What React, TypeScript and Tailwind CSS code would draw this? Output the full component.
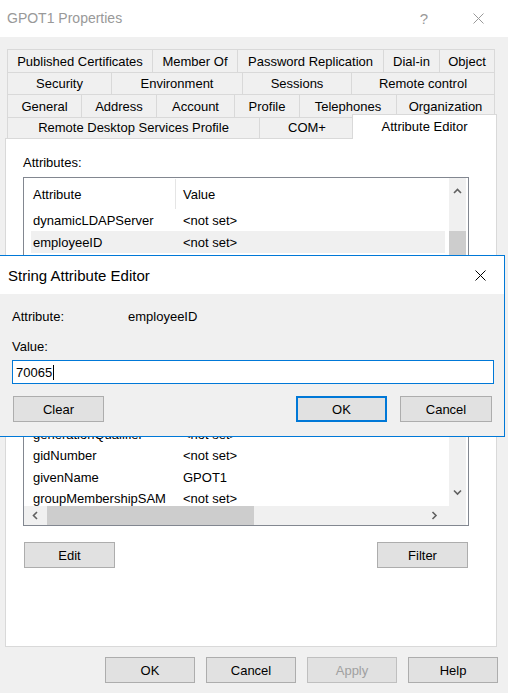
import React from "react";

const rows: [string, string][] = [
  ["dynamicLDAPServer", "<not set>"],
  ["employeeID", "<not set>"],
  ["employeeNumber", "<not set>"],
  ["employeeType", "<not set>"],
  ["extensionName", "<not set>"],
  ["facsimileTelephoneNumber", "<not set>"],
  ["flags", "<not set>"],
  ["fromEntry", "<not set>"],
  ["garbageCollPeriod", "<not set>"],
  ["gecos", "<not set>"],
  ["generationQualifier", "<not set>"],
  ["gidNumber", "<not set>"],
  ["givenName", "GPOT1"],
  ["groupMembershipSAM", "<not set>"],
];

function CloseIcon({ color }: { color: string }) {
  return (
    <svg width="11" height="11" viewBox="0 0 11 11">
      <path d="M0.5 0.5 L10.5 10.5 M10.5 0.5 L0.5 10.5" stroke={color} strokeWidth="1" fill="none" />
    </svg>
  );
}

function Chevron({ dir }: { dir: "up" | "down" | "left" | "right" }) {
  const d =
    dir === "up"
      ? "M1 5 L4.5 1.5 L8 5"
      : dir === "down"
      ? "M1 1.5 L4.5 5 L8 1.5"
      : dir === "left"
      ? "M5 1 L1.5 4.5 L5 8"
      : "M1.5 1 L5 4.5 L1.5 8";
  const w = dir === "up" || dir === "down" ? 9 : 7;
  const h = dir === "up" || dir === "down" ? 7 : 9;
  return (
    <svg width={w} height={h} viewBox={`0 0 ${w} ${h}`}>
      <path d={d} stroke="#606060" strokeWidth="1.6" fill="none" />
    </svg>
  );
}

function Tab({ w, label, last }: { w: number; label: string; last?: boolean }) {
  return (
    <div
      className={`flex items-center justify-center border-t border-l border-[#d9d9d9] bg-[#f0f0f0] ${last ? "border-r" : ""}`}
      style={{ width: w }}
    >
      {label}
    </div>
  );
}

function Btn({ label, className = "" }: { label: string; className?: string }) {
  return (
    <div
      className={`flex h-[26px] w-[90px] items-center justify-center border border-[#adadad] bg-[#e1e1e1] ${className}`}
    >
      {label}
    </div>
  );
}

export default function App() {
  return (
    <div className="relative h-[693px] w-[508px] overflow-hidden bg-[#f0f0f0] font-['Liberation_Sans',Arial,sans-serif] text-[13px] leading-[15px] text-black">
      {/* Title bar */}
      <div className="flex h-[37px] items-center bg-white pl-[7px]">
        <span className="text-[14px] text-[#999999]">GPOT1 Properties</span>
        <span className="ml-auto mr-[45px] text-[15px] text-[#999999]">?</span>
        <span className="mr-[24px] flex">
          <CloseIcon color="#999999" />
        </span>
      </div>

      {/* Tabs */}
      <div className="pl-[7px] pt-[12px]">
        <div className="flex h-[23px]">
          <Tab w={145} label="Published Certificates" />
          <Tab w={85} label="Member Of" />
          <Tab w={146} label="Password Replication" />
          <Tab w={56} label="Dial-in" />
          <Tab w={56} label="Object" last />
        </div>
        <div className="flex h-[22px]">
          <Tab w={104} label="Security" />
          <Tab w={131} label="Environment" />
          <Tab w={109} label="Sessions" />
          <Tab w={144} label="Remote control" last />
        </div>
        <div className="flex h-[23px]">
          <Tab w={74} label="General" />
          <Tab w={75} label="Address" />
          <Tab w={78} label="Account" />
          <Tab w={65} label="Profile" />
          <Tab w={97} label="Telephones" />
          <Tab w={99} label="Organization" last />
        </div>
        <div className="flex h-[21px] items-end">
          <div className="flex h-[21px] w-[252px] items-center justify-center border-t border-l border-[#d9d9d9] bg-[#f0f0f0] pb-px">
            Remote Desktop Services Profile
          </div>
          <div className="flex h-[21px] w-[95px] items-center justify-center border-t border-l border-[#d9d9d9] bg-[#f0f0f0] pb-px">
            COM+
          </div>
          <div className="relative z-10 -mb-px -ml-[2px] flex h-[25px] w-[145px] items-start justify-center border-x border-t border-[#d9d9d9] bg-white pt-[4px]">
            Attribute Editor
          </div>
        </div>
      </div>

      {/* Panel */}
      <div className="ml-[5px] h-[509px] w-[492px] border border-[#d9d9d9] bg-white pl-[17px] pt-[16px]">
        <div>Attributes:</div>
        <div className="mt-[7px] flex h-[349px] w-[446px] flex-col border border-[#828790] bg-white">
          <div className="flex h-[328px]">
            <div className="h-[328px] w-[425px] overflow-hidden">
              <div className="flex h-[32px] items-center">
                <div className="w-[151px] pl-[9px]">Attribute</div>
                <div className="h-[30px] w-px bg-[#e5e5e5]" />
                <div className="pl-[7px]">Value</div>
              </div>
              {rows.map(([a, v], i) => (
                <div
                  key={a}
                  className={`ml-[7px] flex h-[21.4px] w-[414px] items-center ${i === 1 ? "bg-[#f0f0f0]" : ""}`}
                >
                  <div className="w-[144px] whitespace-nowrap pl-[2px]">{a}</div>
                  <div className="pl-[8px]">{v}</div>
                </div>
              ))}
            </div>
            <div className="flex w-[17px] flex-col bg-[#f0f0f0]">
              <div className="flex h-[26px] items-center justify-center">
                <Chevron dir="up" />
              </div>
              <div className="h-[27px]" />
              <div className="h-[170px] bg-[#cdcdcd]" />
              <div className="flex-1" />
              <div className="flex h-[28px] items-center justify-center">
                <Chevron dir="down" />
              </div>
            </div>
          </div>
          <div className="flex h-[19px]">
            <div className="flex w-[425px] bg-[#f0f0f0]">
              <div className="flex w-[23px] items-center justify-center">
                <Chevron dir="left" />
              </div>
              <div className="w-[207px] bg-[#cdcdcd]" />
              <div className="flex-1" />
              <div className="flex w-[30px] items-center justify-center">
                <Chevron dir="right" />
              </div>
            </div>
            <div className="w-[17px] bg-[#f0f0f0]" />
          </div>
        </div>
        <div className="ml-px mt-[16px] flex w-[444px] justify-between">
          <Btn label="Edit" className="w-[91px]" />
          <Btn label="Filter" className="w-[91px]" />
        </div>
      </div>

      {/* Bottom buttons */}
      <div className="mt-[10px] flex justify-end gap-[11px] pr-[10px]">
        <Btn label="OK" />
        <Btn label="Cancel" />
        <Btn label="Apply" className="border-[#bfbfbf] bg-[#cccccc] text-[#a0a0a0]" />
        <Btn label="Help" />
      </div>

      {/* String Attribute Editor dialog */}
      <div className="absolute left-[-1px] top-[255px] z-20 flex h-[182px] w-[506px] flex-col border border-[#0078d7] bg-[#f0f0f0]">
        <div className="flex h-[38px] items-center bg-white pl-[8px]">
          <span className="text-[15px]">String Attribute Editor</span>
          <span className="ml-auto mr-[18px] flex">
            <CloseIcon color="#000000" />
          </span>
        </div>
        <div className="flex-1 pl-[12px] pt-[15px]">
          <div className="flex">
            <div className="w-[116px]">Attribute:</div>
            <div>employeeID</div>
          </div>
          <div className="mt-[15px]">Value:</div>
          <div className="mt-[6px] flex h-[24px] w-[482px] items-center border border-[#0078d7] bg-white pl-[3px]">
            <span>70065</span>
            <span className="ml-px h-[15px] w-px bg-black" />
          </div>
          <div className="mt-[12px] flex w-[480px]">
            <Btn label="Clear" className="ml-px w-[91px]" />
            <div className="ml-auto flex h-[26px] w-[91px] items-center justify-center border-2 border-[#0078d7] bg-[#e1e1e1]">
              OK
            </div>
            <Btn label="Cancel" className="ml-[13px] w-[92px]" />
          </div>
        </div>
      </div>
    </div>
  );
}
